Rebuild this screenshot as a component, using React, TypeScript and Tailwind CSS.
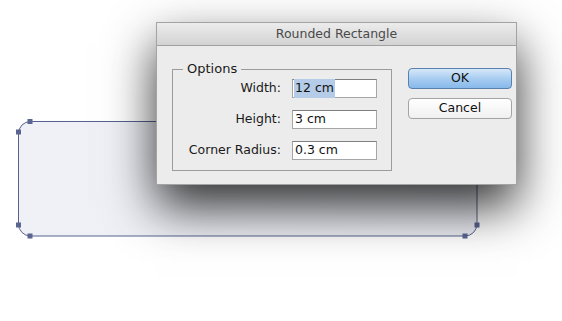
const font = "font-['DejaVu_Sans',sans-serif]";

const rows = [
  { label: "Width:", value: "12 cm", selected: true },
  { label: "Height:", value: "3 cm", selected: false },
  { label: "Corner Radius:", value: "0.3 cm", selected: false },
];

function Handle({ x, y }: { x: number; y: number }) {
  return <rect x={x - 2.5} y={y - 2.5} width={5} height={5} fill="#5a6591" />;
}

function Canvas() {
  // the rounded rectangle drawn in the document, with its corner handles
  return (
    <svg className="absolute left-0 top-0" width={562} height={321}>
      <defs>
        <linearGradient id="fill" x1="0" y1="0" x2="1" y2="0">
          <stop offset="0" stopColor="#eff1f6" />
          <stop offset="1" stopColor="#eceef4" />
        </linearGradient>
      </defs>
      <rect
        x={18.5}
        y={121.5}
        width={458.5}
        height={114.5}
        rx={12}
        fill="url(#fill)"
        stroke="#56628f"
        strokeWidth={1}
      />
      <Handle x={30} y={121.5} />
      <Handle x={18.5} y={132} />
      <Handle x={18.5} y={225} />
      <Handle x={30} y={236} />
      <Handle x={465} y={236} />
      <Handle x={477} y={225} />
    </svg>
  );
}

function Dialog() {
  return (
    <div
      className={`absolute left-[156px] top-[22px] w-[361px] h-[163px] flex flex-col border border-[#a3a3a3] bg-[#ececec] shadow-[0_22px_46px_rgba(0,0,0,0.8)] ${font}`}
    >
      <div className="h-[23px] flex items-center justify-center bg-gradient-to-b from-[#ececec] to-[#d3d3d3] border-b border-[#a0a0a0] text-[12.5px] text-[#4a4a4a]">
        Rounded Rectangle
      </div>
      <div className="flex pl-[15px] pt-[15px]">
        <fieldset className="w-[220px] h-[110px] border border-[#9b9b9b]">
          <legend className="ml-[10px] px-[4px] text-[13px] leading-[16px] text-[#1a1a1a]">
            Options
          </legend>
          <div className="flex flex-col items-end gap-[12px] pt-[2px] pr-[14px]">
            {rows.map((r) => (
              <div key={r.label} className="flex items-center gap-[11px]">
                <span className="text-[12.5px] text-[#1a1a1a]">{r.label}</span>
                <div className="w-[85px] h-[19px] flex items-center bg-white border border-[#a6a6a6] border-t-[#7f7f7f] pl-[1px] text-[12.5px] text-[#111]">
                  <span className={r.selected ? "bg-[#b5cce8] px-[1px]" : "px-[1px]"}>
                    {r.value}
                  </span>
                </div>
              </div>
            ))}
          </div>
        </fieldset>
        <div className="ml-[16px] mt-[7px] flex flex-col gap-[9px]">
          <button className="w-[104px] h-[21px] rounded-[4px] border border-[#5a80ad] bg-gradient-to-b from-[#d6e8fa] via-[#a9cdf1] to-[#86b9ea] text-[12.5px] text-[#111] leading-none">
            OK
          </button>
          <button className="w-[104px] h-[21px] rounded-[4px] border border-[#a4a4a4] bg-gradient-to-b from-white to-[#f0f0f0] text-[12.5px] text-[#111] leading-none">
            Cancel
          </button>
        </div>
      </div>
    </div>
  );
}

export default function App() {
  return (
    <div className="relative w-[562px] h-[321px] overflow-hidden bg-white">
      <Canvas />
      <Dialog />
    </div>
  );
}
